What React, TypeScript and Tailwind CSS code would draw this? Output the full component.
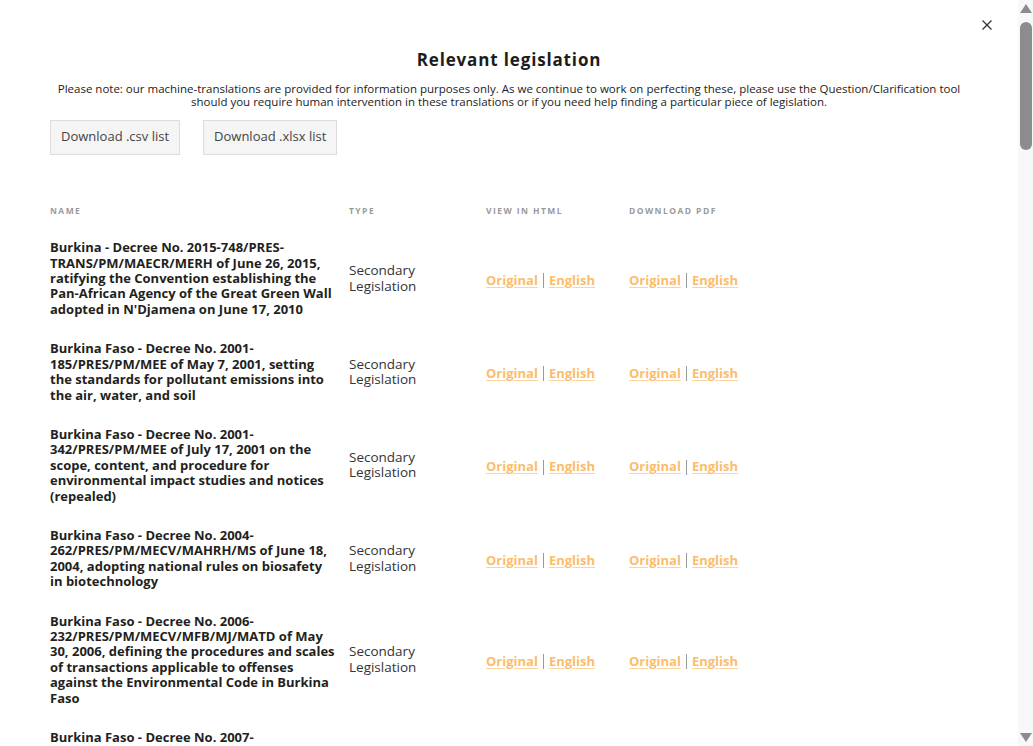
import React from 'react';

const rows: string[] = [
  "Burkina - Decree No. 2015-748/PRES-TRANS/PM/MAECR/MERH of June 26, 2015, ratifying the Convention establishing the Pan-African Agency of the Great Green Wall adopted in N'Djamena on June 17, 2010",
  'Burkina Faso - Decree No. 2001-185/PRES/PM/MEE of May 7, 2001, setting the standards for pollutant emissions into the air, water, and soil',
  'Burkina Faso - Decree No. 2001-342/PRES/PM/MEE of July 17, 2001 on the scope, content, and procedure for environmental impact studies and notices (repealed)',
  'Burkina Faso - Decree No. 2004-262/PRES/PM/MECV/MAHRH/MS of June 18, 2004, adopting national rules on biosafety in biotechnology',
  'Burkina Faso - Decree No. 2006-232/PRES/PM/MECV/MFB/MJ/MATD of May 30, 2006, defining the procedures and scales of transactions applicable to offenses against the Environmental Code in Burkina Faso',
  'Burkina Faso - Decree No. 2007-853/PRES/PM/MECV/MCPEA/MFB of December 26, 2007 on the specific environmental rules for the operation of classified installations',
  'Burkina Faso - Decree No. 2008-125/PRES/PM/MECV/MS of March 6, 2008 on the management of hazardous waste',
  'Burkina Faso - Decree No. 2009-101/PRES/PM/MECV/MFB of March 3, 2009 on the organization of the environmental police',
];

const font = { fontFamily: '"Open Sans", "Noto Sans", sans-serif' };

const LinkPair = () => (
  <span className="inline-flex items-center text-[13px] font-bold text-[#fbbd6c]">
    <a href="#" className="underline decoration-[#fcd49c] underline-offset-2">Original</a>
    <span className="mx-[5px] inline-block h-[15px] w-px bg-[#9a9a9a]" />
    <a href="#" className="underline decoration-[#fcd49c] underline-offset-2">English</a>
  </span>
);

const Scrollbar = () => (
  <div className="flex h-full w-[15px] shrink-0 flex-col items-center bg-[#f8f8f8]">
    <div className="mt-[4px] h-0 w-0 border-x-[6px] border-b-[9px] border-x-transparent border-b-[#8c8c8c]" />
    <div className="mt-[9px] h-[128px] w-[12px] rounded-full bg-[#8c8c8c]" />
    <div className="flex-1" />
    <div className="mb-[4px] h-0 w-0 border-x-[6px] border-t-[9px] border-x-transparent border-t-[#8c8c8c]" />
  </div>
);

export default function App() {
  return (
    <div className="flex h-screen overflow-hidden bg-white text-[#231f20]" style={font}>
      <div className="relative min-w-0 flex-1 overflow-hidden px-[50px] pb-[60px]">
        <button className="absolute right-[26px] top-[20px] text-[#333]" aria-label="Close">
          <svg width="10" height="10" viewBox="0 0 10 10" fill="none" stroke="currentColor" strokeWidth="1.3">
            <path d="M0.5 0.5l9 9M9.5 0.5l-9 9" />
          </svg>
        </button>

        <h1 className="pt-[47px] text-center text-[17px] font-bold tracking-[0.05em] text-[#1c1c1c]">
          Relevant legislation
        </h1>
        <p className="mt-[9px] text-center text-[11.5px] leading-[13px] text-[#222]">
          Please note: our machine-translations are provided for information purposes only. As we continue to work on perfecting these, please use the Question/Clarification tool
          <br />
          should you require human intervention in these translations or if you need help finding a particular piece of legislation.
        </p>

        <div className="mt-[12px] flex gap-[23px]">
          <button className="h-[35px] border border-[#dcdcdc] bg-[#f5f5f5] px-[10px] text-[13px] text-[#444]">
            Download .csv list
          </button>
          <button className="h-[35px] border border-[#dcdcdc] bg-[#f5f5f5] px-[10px] text-[13px] text-[#444]">
            Download .xlsx list
          </button>
        </div>

        <table className="mt-[50px] w-[722px] table-fixed border-collapse text-left">
          <thead>
            <tr className="text-[8.5px] font-bold uppercase tracking-[0.17em] text-[#9a9a9a]">
              <th className="w-[299px] pb-[11px] font-bold">Name</th>
              <th className="w-[137px] pb-[11px] font-bold">Type</th>
              <th className="w-[143px] pb-[11px] font-bold">View in HTML</th>
              <th className="w-[143px] pb-[11px] font-bold">Download PDF</th>
            </tr>
          </thead>
          <tbody>
            {rows.map((name, i) => (
              <tr key={i} className="align-middle">
                <td className="py-[12px] pr-[13px] text-[13px] font-bold leading-[15.4px] text-[#231f20]">{name}</td>
                <td className="py-[12px] text-[13.5px] leading-[15.4px] text-[#333]">
                  Secondary
                  <br />
                  Legislation
                </td>
                <td className="py-[12px]"><LinkPair /></td>
                <td className="py-[12px]"><LinkPair /></td>
              </tr>
            ))}
          </tbody>
        </table>
      </div>
      <Scrollbar />
    </div>
  );
}
